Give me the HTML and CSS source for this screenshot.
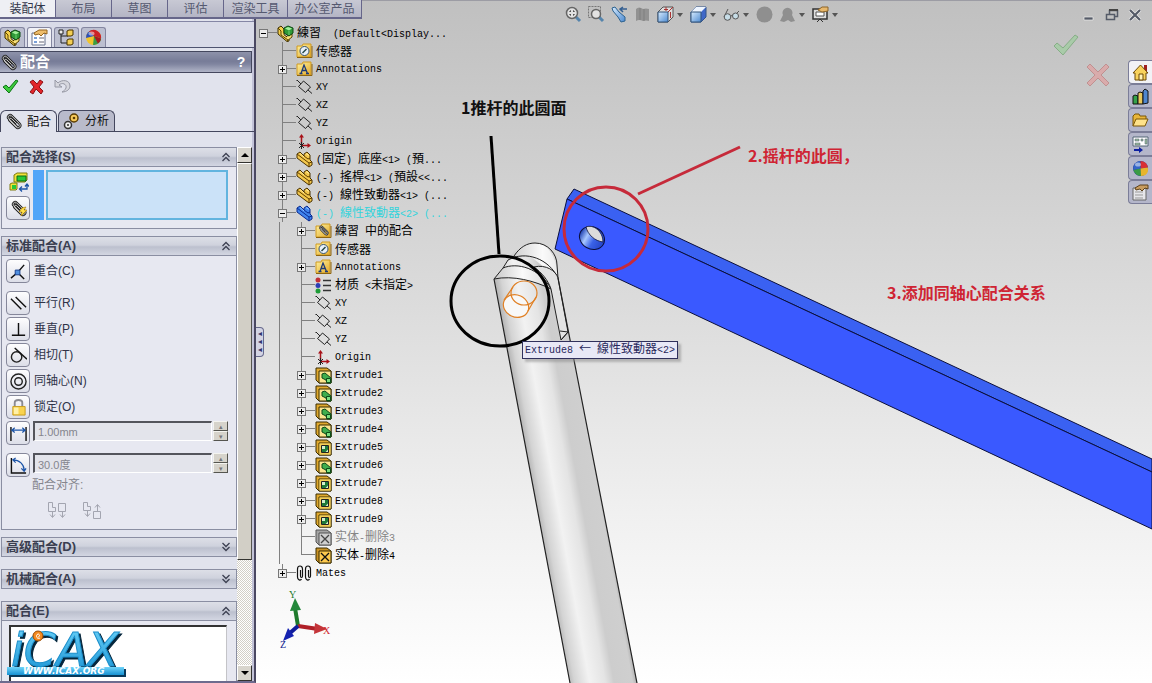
FILE: index.html
```html
<!DOCTYPE html>
<html lang="zh-CN">
<head>
<meta charset="utf-8">
<title>練習</title>
<link rel="stylesheet" href="styles.css">
</head>
<body>
<svg class="defs" aria-hidden="true">
  <defs>
    <linearGradient id="gold" x1="0" y1="0" x2="1" y2="1"><stop offset="0" stop-color="#fff3a0"/><stop offset="1" stop-color="#e2a82a"/></linearGradient>
    <linearGradient id="rod" gradientUnits="userSpaceOnUse" x1="512" y1="375" x2="578" y2="363"><stop offset="0" stop-color="#b4b4b4"/><stop offset=".1" stop-color="#d4d4d4"/><stop offset=".32" stop-color="#f2f2f2"/><stop offset=".55" stop-color="#e4e4e4"/><stop offset=".68" stop-color="#cdcdcd"/><stop offset=".95" stop-color="#cfcfcf"/><stop offset="1" stop-color="#b8b8b8"/></linearGradient>
    <linearGradient id="dome" x1="0" y1="0" x2="1" y2="0"><stop offset="0" stop-color="#c8c8c8"/><stop offset=".5" stop-color="#fafafa"/><stop offset="1" stop-color="#d8d8d8"/></linearGradient>
    <linearGradient id="bore" x1="0" y1="0" x2="1" y2="0"><stop offset="0" stop-color="#1b3db0"/><stop offset=".3" stop-color="#a8c8ff"/><stop offset=".6" stop-color="#3a62e8"/><stop offset="1" stop-color="#2545c8"/></linearGradient>
    <linearGradient id="cyan" x1="0" y1="0" x2="0" y2="1"><stop offset="0" stop-color="#6fd4fa"/><stop offset="1" stop-color="#1791d2"/></linearGradient>
    <linearGradient id="sky" x1="0" y1="0" x2="1" y2="1"><stop offset="0" stop-color="#d8ecff"/><stop offset="1" stop-color="#4d8ad0"/></linearGradient>
  </defs>
  <symbol id="assembly" viewBox="0 0 17 17"><path d="M1 3l3-2 3 3v6l5 3v3l-2 .500L1 9z" fill="#f4cf4a" stroke="#3a2c00"/><path d="M1 3l3 3v4l7 5M10 16l5-4V9l-5 2" fill="#f9e07a" stroke="#5a4300"/><path d="M7 3l4-2 5 2v5l-4 3-5-3z" fill="#2f9a38" stroke="#0d4a12"/><path d="M8 3.500l3-1.500 4 1.500-3 2z" fill="#a4f09c"/><path d="M12 6v4" stroke="#6fd070"/></symbol>
  <symbol id="part" viewBox="0 0 17 17"><path d="M1 3l3-2 4 4V3l3-2 3 3v5l2 2v3l-3 2L1 7z" fill="#f3c74c" stroke="#4a3200"/><path d="M1 3l12 9v4M13 12l3-1M8 5l4 3 2-1" fill="none" stroke="#5e3d00"/><path d="M4 2.500l4 3.500M10 2.500l3 2" stroke="#ffe99a"/></symbol>
  <symbol id="partblue" viewBox="0 0 17 17"><path d="M1 3l3-2 4 4V3l3-2 3 3v5l2 2v3l-3 2L1 7z" fill="#3f85ee" stroke="#0a2a90"/><path d="M1 3l12 9v4M13 12l3-1M8 5l4 3 2-1" fill="none" stroke="#0a2a90"/><path d="M4 2.500l4 3.500M10 2.500l3 2" stroke="#8fc0ff"/></symbol>
  <symbol id="folder" viewBox="0 0 17 17"><path d="M1 3h5l1-2h8v13H1z" fill="url(#gold)" stroke="#d09a20"/><path d="M1 14.500h15V3" fill="none" stroke="#8e6510"/></symbol>
  <symbol id="sensor" viewBox="0 0 17 17"><use href="#folder"/><circle cx="8.500" cy="8" r="4.500" fill="#e8f1fa" stroke="#35516e"/><path d="M6.500 10l4-4" stroke="#244" stroke-width="1.500"/></symbol>
  <symbol id="note" viewBox="0 0 17 17"><use href="#folder"/><path d="M5 12.500L8 4l3.500 8.500M6 9.500h4M3.500 12.500h3M10 12.500h3" fill="none" stroke="#1d3a78" stroke-width="1.300"/></symbol>
  <symbol id="plane" viewBox="0 0 17 17"><path d="M2.500 8.500l5-5.500 7 6-5 5.500zM1 2l4 4M12 12l4 3.500M1 2v1" transform="translate(0 -1)" fill="none" stroke="#222"/></symbol>
  <symbol id="origin" viewBox="0 0 17 17"><path d="M5.500 12V3M5 12.500h8" stroke="#a81118" fill="none" stroke-width="1.500"/><path d="M3 4.500L5.500 1 8 4.500zM11.500 10l3.500 2.500-3.500 2.500z" fill="#a81118"/><path d="M3 10l5 5M8 10l-5 5M5.500 9v7" stroke="#222"/></symbol>
  <symbol id="clip" viewBox="0 0 18 18"><path d="M13 15L4 6C2 4 5 1 7 3l8 8c3 3-1 6-3 4L5 8c-1-1 0-3 2-2l5 5" fill="none" stroke="#222" stroke-width="2.800"/><path d="M13 15L4 6C2 4 5 1 7 3l8 8c3 3-1 6-3 4L5 8c-1-1 0-3 2-2l5 5" fill="none" stroke="#ddd" stroke-width="1"/></symbol>
  <symbol id="mfolder" viewBox="0 0 17 17"><use href="#folder"/><use href="#clip" x="3" y="2" width="11" height="11"/></symbol>
  <symbol id="material" viewBox="0 0 17 17"><path d="M8 3.500h8M8 8.500h8M8 13.500h8" stroke="#333" stroke-width="1.500"/><circle cx="3" cy="3" r="2.500" fill="#c12e35"/><circle cx="3" cy="8.500" r="2.500" fill="#2b3db5"/><circle cx="3" cy="14" r="2.500" fill="#1f9c38"/></symbol>
  <symbol id="slab" viewBox="0 0 17 17"><path d="M1 1h11l4 3v12H4l-3-3z" fill="#e0a92e" stroke="#3a2c00"/><path d="M4 4h12v12H4z" fill="#fbe58e" stroke="#3a2c00"/></symbol>
  <symbol id="boss" viewBox="0 0 17 17"><use href="#slab"/><path d="M7 7l3-1 6 5v5h-4l-1-3-4-2z" fill="#3fae4d" stroke="#0d4a18"/><path d="M11.500 11.500h4v4h-4z" fill="#7be080" stroke="#0d4a18"/></symbol>
  <symbol id="cut" viewBox="0 0 17 17"><use href="#slab"/><path d="M4.500 4.500h11v11h-11z" fill="#f6cd52"/><path d="M6.500 6.500h7v7h-7z" fill="#d4efcb" stroke="#222"/><path d="M7 10h3V7h3v3.500L10.500 13H7z" fill="#1f7a3a"/></symbol>
  <symbol id="del" viewBox="0 0 17 17"><path d="M1 1h11l4 3v12H4l-3-3z" fill="#c99225" stroke="#3a2c00"/><path d="M4 4h12v12H4z" fill="#fdc94e" stroke="#3a2c00"/><path d="M6 6l8 8M14 6l-8 8" stroke="#111" stroke-width="1.300"/></symbol>
  <symbol id="delgray" viewBox="0 0 17 17"><path d="M1 1h11l4 3v12H4l-3-3z" fill="#a4a4a4" stroke="#555"/><path d="M4 4h12v12H4z" fill="#cfcfcf" stroke="#555"/><path d="M6 6l8 8M14 6l-8 8" stroke="#444" stroke-width="1.300"/></symbol>
  <symbol id="mates" viewBox="0 0 17 17"><path d="M4.500 5v6c0 2 2 2 2 0V4c0-4-5-4-5 0v8c0 3 3 4 4 2M12.500 5v6c0 2 2 2 2 0V4c0-4-5-4-5 0v8c0 3 3 4 4 2" fill="none" stroke="#111" stroke-width="1.200"/></symbol>
  <symbol id="prop" viewBox="0 0 17 17"><path d="M1 4h13v12H1z" fill="#fff" stroke="#66708c"/><path d="M3 8h3v2H3zM3 12h3v2H3z" fill="#7aa0d8"/><path d="M8 9h5M8 13h5" stroke="#667" /><path d="M3 4l5-3h8v4l-3-1-3 3-2-2-4 1z" fill="#eebd6b" stroke="#94651f"/></symbol>
  <symbol id="ball" viewBox="0 0 17 17"><circle cx="8.500" cy="8.500" r="7.500" fill="#28439c"/><path d="M8.500 8.500V1a7.500 7.500 0 0 1 7.400 6.500z" fill="#d93033"/><path d="M8.500 8.500L8 1a7.500 7.500 0 0 0-6.500 9z" fill="#3565c8"/><path d="M8.500 8.500l-7 1.500A7.500 7.500 0 0 0 9 16z" fill="#3a9b46"/><path d="M9 16l-.500-7.500 7.400-1c1 5-2 8.500-6.900 8.500z" fill="#e8b52c"/><ellipse cx="6" cy="4.500" rx="3" ry="2" fill="#fff" opacity=".5"/></symbol>
  <symbol id="ballred" viewBox="0 0 17 17"><circle cx="8.500" cy="8.500" r="7.500" fill="#f2c52c"/><path d="M1 9a7.500 7.500 0 0 1 7-8l1 6z" fill="#2c4fb8"/><path d="M4 2.500a7.500 7.500 0 0 1 12 7L9 7z" fill="#cc2227"/><path d="M9 7l7 2.500c0 4-4 6.500-8 6.500z" fill="#3a9b46"/><path d="M9 7l6.900 2.500c0 2-1.500 4-3 5z" fill="#a81a20"/><ellipse cx="6.500" cy="4.500" rx="3" ry="2" fill="#fff" opacity=".5"/></symbol>
  <symbol id="caret" viewBox="0 0 6 4"><path d="M0 0h6L3 4z" fill="#555"/></symbol>
  <symbol id="up2" viewBox="0 0 10 10"><path d="M1.500 5L5 1.500 8.500 5M1.500 9L5 5.500 8.500 9" fill="none" stroke="#3d4152" stroke-width="1.300"/></symbol>
  <symbol id="down2" viewBox="0 0 10 10"><path d="M1.500 1L5 4.500 8.500 1M1.500 5L5 8.500 8.500 5" fill="none" stroke="#3d4152" stroke-width="1.300"/></symbol>
</svg>

<div class="app">
  <nav class="ribbon">
    <button class="rtab on">装配体</button><button class="rtab">布局</button><button class="rtab">草图</button><button class="rtab">评估</button><button class="rtab wide">渲染工具</button><button class="rtab wider">办公室产品</button>
  </nav>

  <aside class="panel">
    <div class="modes">
      <button class="mode" aria-label="设计树"><svg class="ic"><use href="#assembly"/></svg></button>
      <button class="mode on" aria-label="属性"><svg class="ic"><use href="#prop"/></svg></button>
      <button class="mode" aria-label="配置"><svg class="ic" viewBox="0 0 17 17"><path d="M3 1v13h7M3 7h7" fill="none" stroke="#222"/><path d="M1 1h4v4H1z" fill="#eee" stroke="#222"/><path d="M9 2l2-1h4v5l-2 1H9zM9 11l2-1h4v5l-2 1H9z" fill="#f3cf55" stroke="#4a3500"/></svg></button>
      <button class="mode" aria-label="外观"><svg class="ic"><use href="#ballred"/></svg></button>
    </div>
    <header class="title"><svg class="ic"><use href="#clip"/></svg><h1>配合</h1><button class="help" aria-label="帮助">?</button></header>
    <div class="acts">
      <button class="plain" aria-label="确定"><svg class="ic" viewBox="0 0 17 17"><path d="M1 9l3-2 3 3 7-8 2 1L7 15z" fill="#3ccb3c" stroke="#0e7415"/></svg></button>
      <button class="plain" aria-label="取消"><svg class="ic" viewBox="0 0 17 17"><path d="M2 4l3-2 4 4 3-4 3 2-4 5 4 4-2 3-5-5-3 5-3-2 4-5z" fill="#e2252a" stroke="#8e1014"/></svg></button>
      <button class="plain" aria-label="撤消"><svg class="ic" viewBox="0 0 17 17"><path d="M1 2v7h7L5 7c3-3 8-1 7 3-1 2-2 3-4 4 5 0 8-3 8-6 0-6-8-7-12-3z" fill="#d6d7de" stroke="#9698a4"/></svg></button>
    </div>
    <div class="subtabs">
      <button class="stab on"><svg class="ic"><use href="#clip"/></svg>配合</button>
      <button class="stab"><svg class="ic" viewBox="0 0 17 17"><circle cx="11" cy="5" r="4" fill="#f6c95a" stroke="#5b3c00" stroke-width="1.500"/><circle cx="11" cy="5" r="1.300" fill="#5b3c00"/><circle cx="5" cy="12" r="3.500" fill="#eee" stroke="#333" stroke-width="1.500"/><circle cx="5" cy="12" r="1" fill="#333"/></svg>分析</button>
    </div>

    <div class="scroller">
      <div class="groups">
        <section class="group">
          <h2>配合选择(S)<svg><use href="#up2"/></svg></h2>
          <div class="pick">
            <div class="pickicons">
              <svg class="ents" viewBox="0 0 20 20"><path d="M5 3l3-2h10v7l-2 2H5z" fill="#f2e23a" stroke="#7d7a10"/><path d="M8 4h9v5H8z" fill="#27c93a" stroke="#0b6b16"/><path d="M1 12l2-1h5v6l-1 1H1z" fill="#f2e23a" stroke="#7d7a10"/><path d="M3 13h4v4H3z" fill="#27c93a"/><path d="M11 17h7v-4M13 14.500L10.500 17l2.500 2.500M16 14.500l2-2.500 2 2.500" fill="none" stroke="#1d55a8" stroke-width="1.300"/></svg>
              <button class="box" aria-label="多配合模式"><svg class="ic"><use href="#clip"/><path d="M12 8l4-1-2 3h3l-6 6 1-4h-3z" fill="#ffe04a" stroke="#a87a00" stroke-width=".600"/></svg></button>
            </div>
            <span class="swatch"></span>
            <textarea class="sel" aria-label="配合选择"></textarea>
          </div>
        </section>

        <section class="group">
          <h2>标准配合(A)<svg><use href="#up2"/></svg></h2>
          <div class="mates">
            <button class="mate first"><span class="box"><svg class="ic" viewBox="0 0 18 18"><path d="M1 16l7-6 7-8M8 10l7 7" fill="none" stroke="#111" stroke-width="1.500"/><path d="M5.500 7.500h5v5h-5z" fill="#4f8fe0" stroke="#173f8c"/></svg></span>重合(C)</button>
            <button class="mate"><span class="box"><svg class="ic" viewBox="0 0 18 18"><path d="M1 4l11 11M6 2l11 11" stroke="#111" stroke-width="1.500"/></svg></span>平行(R)</button>
            <button class="mate"><span class="box"><svg class="ic" viewBox="0 0 18 18"><path d="M9 2v12.500M2 15h14" stroke="#111" stroke-width="1.500"/></svg></span>垂直(P)</button>
            <button class="mate"><span class="box"><svg class="ic" viewBox="0 0 18 18"><circle cx="7" cy="10.500" r="5.500" fill="none" stroke="#222" stroke-width="1.500"/><path d="M5 1l13 12" stroke="#111" stroke-width="1.500"/></svg></span>相切(T)</button>
            <button class="mate"><span class="box"><svg class="ic" viewBox="0 0 18 18"><circle cx="9" cy="9" r="8" fill="none" stroke="#222" stroke-width="1.500"/><circle cx="9" cy="9" r="4" fill="none" stroke="#222" stroke-width="1.500"/></svg></span>同轴心(N)</button>
            <button class="mate"><span class="box"><svg class="ic" viewBox="0 0 18 18"><path d="M5 8V4c0-4 8-4 8 0v4" fill="none" stroke="#8b8b92" stroke-width="2"/><path d="M3 8h13v9H3z" fill="#f9d34f" stroke="#c79a1a"/><path d="M4 9h5v7H4z" fill="#fff1a8"/></svg></span>锁定(O)</button>
            <div class="value">
              <button class="box" aria-label="距离"><svg class="ic" viewBox="0 0 18 18"><path d="M1 2v15M17 2v15" stroke="#111" stroke-width="1.500"/><path d="M2 5.500h14M5 3L2 5.500 5 8M13 3l3 2.500L13 8" fill="none" stroke="#1d55a8" stroke-width="1.300"/></svg></button>
              <input type="text" value="1.00mm" aria-label="距离值" disabled>
              <span class="spin"><button aria-label="增加" disabled>▴</button><button aria-label="减少" disabled>▾</button></span>
            </div>
            <div class="value angle">
              <button class="box" aria-label="角度"><svg class="ic" viewBox="0 0 18 18"><path d="M1.500 1v16H17" fill="none" stroke="#111" stroke-width="1.500"/><path d="M3 3c7 0 12 5 12 11M6 1L3 3l3 3M12 12l3 3 2-3" fill="none" stroke="#1d55a8" stroke-width="1.300"/></svg></button>
              <input type="text" value="30.0度" aria-label="角度值" disabled>
              <span class="spin"><button aria-label="增加" disabled>▴</button><button aria-label="减少" disabled>▾</button></span>
            </div>
            <p class="align">配合对齐:</p>
            <div class="aligns">
              <button class="plain" aria-label="同向对齐" disabled><svg viewBox="0 0 20 18"><path d="M1.500 1.500h4v5h3v4h-7zM11.500 2.500h7v8h-7zM5.500 11v5M3 13.500l2.500 3 2.500-3M15.500 11v5M13 13.500l2.500 3 2.500-3" fill="none" stroke="#a3a5b0"/></svg></button>
              <button class="plain" aria-label="反向对齐" disabled><svg viewBox="0 0 20 18"><path d="M1.500 1.500h4v4h3v4h-7zM5.500 10v5M3 12.500l2.500 3 2.500-3M11.500 10.500h7v7h-7zM15.500 10V4M13 6.500l2.500-3 2.500 3" fill="none" stroke="#a3a5b0"/></svg></button>
            </div>
          </div>
        </section>

        <section class="group fold"><h2>高级配合(D)<svg><use href="#down2"/></svg></h2></section>
        <section class="group fold"><h2>机械配合(A)<svg><use href="#down2"/></svg></h2></section>
        <section class="group last">
          <h2>配合(E)<svg><use href="#up2"/></svg></h2>
          <div class="list">
            <svg class="logo" viewBox="0 0 120 48" role="img" aria-label="iCAX">
              <text x="4" y="35" class="word">iCAX</text>
              <circle cx="31" cy="5" r="5" fill="#f58a1f" stroke="#9c4a00"/><path d="M33 7c-3 2-5-3-2-4 2 0 2 3 0 3" fill="none" stroke="#fff"/>
              <path d="M2 38h117v8H2z" fill="#083a5c"/><path d="M0 36h117v8H0z" fill="url(#cyan)"/>
              <text x="16" y="43" class="url">WWW.ICAX.ORG</text>
            </svg>
          </div>
        </section>
      </div>
      <div class="bar">
        <button class="arrow" aria-label="向上滚动"><svg viewBox="0 0 8 4"><path d="M0 4l4-4 4 4z"/></svg></button>
        <span class="thumb"></span><span class="track"></span>
        <button class="arrow" aria-label="向下滚动"><svg viewBox="0 0 8 4"><path d="M0 0l4 4 4-4z"/></svg></button>
      </div>
    </div>
  </aside>

  <main class="view">
    <svg class="scene" viewBox="256 0 896 683" preserveAspectRatio="xMinYMin slice">
      <g stroke="#0a0f3c" stroke-linejoin="round">
        <path d="M574 189L567 199 1152 472V459z" fill="#3a61f2"/>
        <path d="M567 199L555 249 1152 529V472z" fill="#3a59ff"/>
        <ellipse cx="592" cy="238" rx="13" ry="11" transform="rotate(30 592 238)" fill="url(#bore)"/>
        <path d="M586 227c7-3 17 4 17 15-8-1-15-7-17-15z" fill="#dcdcdc" stroke-width=".800"/>
      </g>
      <g stroke="#222" stroke-linejoin="round">
        <path d="M508 260C514 248 525 243 535 243c12 0 21 11 23 35l19 92-20-30z" fill="url(#dome)" stroke="none"/>
        <path d="M514 256C520 247 527 243 535 243c13 0 22 11 22 22l1 13" fill="none"/>
        <path d="M494 279L503 268 508 260 530 256 558 278 637 683H570z" fill="url(#rod)" stroke="none"/>
        <path d="M494 279L503 268c14-6 37 0 48 21-16-8-38-14-57-10z" fill="url(#dome)"/>
        <path d="M503 268l5-8c18-10 41-1 50 18" fill="none"/>
        <path d="M551 289c-3-9-9-16-17-22 12-3 22 4 24 11l10 54-7 8z" fill="#e3e3e3"/>
        <path d="M560 331l8 1-7 8" fill="none"/>
        <path d="M494 279L570 683M558 278L637 683" fill="none" stroke-width="1.200"/>
      </g>
      <g stroke="#e08025" fill="none" stroke-width="1.200">
        <ellipse cx="516" cy="306" rx="13" ry="11" transform="rotate(25 516 306)" fill="#f8f8f8"/>
        <ellipse cx="524" cy="293" rx="13" ry="12"/>
        <path d="M504 300l9-13M528 311l8-14"/>
      </g>
      <g fill="none" stroke="#000" stroke-width="3"><ellipse cx="500" cy="301" rx="49" ry="45"/><path d="M491 136l8 118"/></g>
      <g fill="none" stroke="#c62a3a" stroke-width="3"><circle cx="606" cy="229" r="42"/><path d="M638 194l102-47"/></g>
      <text x="461" y="114" class="call">1推杆的此圆面</text>
      <text x="748" y="162" class="call red">2.摇杆的此圆，</text>
      <text x="887" y="299" class="call red">3.添加同轴心配合关系</text>
      <g class="triad">
        <path d="M298 626l-3-18" stroke="#1e7a2c" stroke-width="4"/><path d="M290 611l5-13 6 12z" fill="#23873a"/>
        <path d="M298 626l20 3" stroke="#b02028" stroke-width="4"/><path d="M315 623l12 6-13 5z" fill="#c4353a"/>
        <path d="M298 626l-8 7" stroke="#101c9c" stroke-width="4"/><path d="M288 628l6 8-11 5z" fill="#1522b0"/>
        <text x="289" y="598" fill="#1e7a2c">Y</text><text x="323" y="634" fill="#d0262c">X</text><text x="280" y="648" fill="#10208c">Z</text>
      </g>
    </svg>

    <div class="hud">
      <button aria-label="整屏显示"><svg viewBox="0 0 17 17"><path d="M10 10l5 5" stroke="#5584ac" stroke-width="3"/><circle cx="7" cy="7" r="5.500" fill="#e2e2e2" stroke="#666" stroke-width="1.500"/><path d="M5 6V5h1M8 5h1v1M9 8v1H8M6 9H5V8" fill="none" stroke="#222"/></svg></button>
      <button aria-label="局部放大"><svg viewBox="0 0 17 17"><path d="M.500.500h12v11H.500z" fill="none" stroke="#777" stroke-dasharray="2 1"/><path d="M11 11l4 4" stroke="#5584ac" stroke-width="3"/><circle cx="8" cy="8" r="4.500" fill="#e2e2e2" stroke="#666" stroke-width="1.500"/></svg></button>
      <button aria-label="上一视图"><svg viewBox="0 0 17 17"><path d="M1 2l3-1 4 5 6 5v4l-4 1-3-5-5-6z" fill="url(#sky)" stroke="#2d628f"/><path d="M16 3h-6M12 1L9 3l3 3" fill="none" stroke="#345f91" stroke-width="1.500"/></svg></button>
      <button aria-label="剖面视图"><svg viewBox="0 0 17 17"><path d="M2 3q3-3 7 0 3-1 6 0v12q-3-1-6 0-4-2-7 0z" fill="#929292"/><path d="M6 2v12M10 3v12" stroke="#7e7e7e"/></svg></button>
      <button class="drop" aria-label="视图定向"><svg viewBox="0 0 17 17"><path d="M1 6l5-5h10v10l-5 5H1z" fill="#ddd" stroke="#555"/><path d="M1 6h10v10H1z" fill="url(#sky)" stroke="#33557a"/><path d="M11 6l5-5M7 3.500h4M9 1v4M13.500 6v6" stroke="#a33"/></svg><svg class="caret"><use href="#caret"/></svg></button>
      <button class="drop" aria-label="显示样式"><svg viewBox="0 0 17 17"><path d="M1 6l5-5h10v10l-5 5H1z" fill="#4068c8" stroke="#33558a"/><path d="M1 6l5-5h10l-5 5z" fill="#eef5ff"/><path d="M1 6h10v10H1z" fill="url(#sky)" stroke="#33557a"/></svg><svg class="caret"><use href="#caret"/></svg></button>
      <button class="drop" aria-label="隐藏/显示"><svg viewBox="0 0 17 17"><path d="M1 11L5 3M8 10q2-2 3 0M13 8l3-3" fill="none" stroke="#555"/><circle cx="4.500" cy="11" r="3.300" fill="#c6dce6" stroke="#555"/><circle cx="12.500" cy="10" r="3" fill="#c6dce6" stroke="#555"/></svg><svg class="caret"><use href="#caret"/></svg></button>
      <button aria-label="编辑外观"><svg viewBox="0 0 17 17"><circle cx="8.500" cy="8.500" r="8" fill="#8f8f8f"/></svg></button>
      <button class="drop" aria-label="应用布景"><svg viewBox="0 0 17 17"><path d="M1 15l3-6a5 5 0 1 1 9 0l3 6-4 1-3-2-4 2z" fill="#8f8f8f"/></svg><svg class="caret"><use href="#caret"/></svg></button>
      <button class="drop" aria-label="视图设定"><svg viewBox="0 0 17 17"><path d="M1 3h14v10H1z" fill="#ddd" stroke="#333" stroke-width="1.500"/><path d="M4 6h8v4H4z" fill="#fff" stroke="#555"/><path d="M5 16l3-3 3 3" fill="none" stroke="#333"/><path d="M6 4l4-3h6v4l-6 1z" fill="#e8b86c" stroke="#8c6428"/></svg><svg class="caret"><use href="#caret"/></svg></button>
    </div>

    <div class="wins">
      <button aria-label="最小化"><svg viewBox="0 0 14 14"><path d="M2 9h9v3H2z" fill="#555b68" stroke="#eee" stroke-width=".700"/></svg></button>
      <button aria-label="还原"><svg viewBox="0 0 14 14"><path d="M4.500 6V2.500h8v6H9M1.500 6.500h8v5h-8z" fill="none" stroke="#555b68" stroke-width="1.500"/><path d="M4 2h9" stroke="#444" stroke-width="2"/></svg></button>
      <button aria-label="关闭"><svg viewBox="0 0 14 14"><path d="M2 2l10 10M12 2L2 12" stroke="#eee" stroke-width="3.500"/><path d="M2 2l10 10M12 2L2 12" stroke="#555b68" stroke-width="2.200"/></svg></button>
    </div>
    <button class="okbig" aria-label="确定"><svg viewBox="0 0 26 22"><path d="M1 12l3-3 6 5L22 1l3 2-15 18z" fill="#a9cba9" stroke="#86ae86"/></svg></button>
    <button class="nobig" aria-label="取消"><svg viewBox="0 0 24 24"><path d="M1 4l3-3 8 8 8-8 3 3-8 8 8 8-3 3-8-8-8 8-3-3 8-8z" fill="#d9abab" stroke="#c09090"/></svg></button>

    <div class="task">
      <button class="on" aria-label="资源"><svg class="ic" viewBox="0 0 17 17"><path d="M12 1h3v6h-3z" fill="#a02020"/><path d="M1 9l7.500-8L16 9h-2v7H3V9z" fill="#f8d25c" stroke="#6d4a08"/><path d="M7 10h4v6H7z" fill="#fff3b8" stroke="#6d4a08"/></svg></button>
      <button aria-label="设计库"><svg class="ic" viewBox="0 0 17 17"><path d="M1 8l2-1 3 1v8H1z" fill="#33a14a" stroke="#111"/><path d="M6 5l2-1 3 1v11H6z" fill="#e8c85c" stroke="#111"/><path d="M11 3l2-2 3 2v12l-5 1z" fill="#4e86cf" stroke="#111"/></svg></button>
      <button aria-label="文件"><svg class="ic" viewBox="0 0 17 17"><path d="M1 14V4l2-2h4l1 2h6v3" fill="#e9b63c" stroke="#7b5708"/><path d="M1 14l3-7h12l-3 7z" fill="#ffe28a" stroke="#7b5708"/></svg></button>
      <button aria-label="视图调色板"><svg class="ic" viewBox="0 0 17 17"><path d="M1 1h15v9H1z" fill="#fff" stroke="#567"/><path d="M3 3h4v2H3zM9 3h2v2H9zM3 7h5v2H3zM13 3h2v5h-2z" fill="#9fc0a0" stroke="#456" stroke-width=".500"/><path d="M2 13h5v-2l4 3-4 3v-2H2z" fill="#0c1fa0"/></svg></button>
      <button aria-label="外观"><svg class="ic"><use href="#ball"/></svg></button>
      <button aria-label="自定义属性"><svg class="ic" viewBox="0 0 17 17"><path d="M1 4h13v12H1z" fill="#e6e6ea" stroke="#666"/><path d="M3 8h8M3 11h8M3 14h8" stroke="#999"/><path d="M3 4l5-3h8v4l-3-1-3 3-2-2-4 1z" fill="#c99d60" stroke="#5c401a"/></svg></button>
    </div>

    <button class="grip" aria-label="折叠面板">◂<br>◂<br>◂</button>

    <ul class="tree">
      <li><div class="row"><span class="twig"><button class="ex open" aria-label="折叠"></button></span><svg class="ic"><use href="#assembly"/></svg><span class="lb"><span class="zh">練習</span>&nbsp; (Default&lt;Display...</span></div>
        <ul>
          <li><div class="row"><span class="twig"></span><svg class="ic"><use href="#sensor"/></svg><span class="lb zh">传感器</span></div></li>
          <li><div class="row"><span class="twig"><button class="ex" aria-label="展开"></button></span><svg class="ic"><use href="#note"/></svg><span class="lb lat">Annotations</span></div></li>
          <li><div class="row"><span class="twig"></span><svg class="ic"><use href="#plane"/></svg><span class="lb lat">XY</span></div></li>
          <li><div class="row"><span class="twig"></span><svg class="ic"><use href="#plane"/></svg><span class="lb lat">XZ</span></div></li>
          <li><div class="row"><span class="twig"></span><svg class="ic"><use href="#plane"/></svg><span class="lb lat">YZ</span></div></li>
          <li><div class="row"><span class="twig"></span><svg class="ic"><use href="#origin"/></svg><span class="lb lat">Origin</span></div></li>
          <li><div class="row"><span class="twig"><button class="ex" aria-label="展开"></button></span><svg class="ic"><use href="#part"/></svg><span class="lb">(<span class="zh">固定</span>) <span class="zh">底座</span>&lt;1&gt; (<span class="zh">預</span>...</span></div></li>
          <li><div class="row"><span class="twig"><button class="ex" aria-label="展开"></button></span><svg class="ic"><use href="#part"/></svg><span class="lb">(-) <span class="zh">搖桿</span>&lt;1&gt; (<span class="zh">預設</span>&lt;&lt;...</span></div></li>
          <li><div class="row"><span class="twig"><button class="ex" aria-label="展开"></button></span><svg class="ic"><use href="#part"/></svg><span class="lb">(-) <span class="zh">線性致動器</span>&lt;1&gt; (...</span></div></li>
          <li class="branch"><div class="row"><span class="twig"><button class="ex open" aria-label="折叠"></button></span><svg class="ic"><use href="#partblue"/></svg><span class="lb picked">(-) <span class="zh">線性致動器</span>&lt;2&gt; (...</span></div>
            <ul>
              <li><div class="row"><span class="twig"><button class="ex" aria-label="展开"></button></span><svg class="ic"><use href="#mfolder"/></svg><span class="lb"><span class="zh">練習</span> <span class="zh">中的配合</span></span></div></li>
              <li><div class="row"><span class="twig"></span><svg class="ic"><use href="#sensor"/></svg><span class="lb zh">传感器</span></div></li>
              <li><div class="row"><span class="twig"><button class="ex" aria-label="展开"></button></span><svg class="ic"><use href="#note"/></svg><span class="lb lat">Annotations</span></div></li>
              <li><div class="row"><span class="twig"></span><svg class="ic"><use href="#material"/></svg><span class="lb"><span class="zh">材质</span> &lt;<span class="zh">未指定</span>&gt;</span></div></li>
              <li><div class="row"><span class="twig"></span><svg class="ic"><use href="#plane"/></svg><span class="lb lat">XY</span></div></li>
              <li><div class="row"><span class="twig"></span><svg class="ic"><use href="#plane"/></svg><span class="lb lat">XZ</span></div></li>
              <li><div class="row"><span class="twig"></span><svg class="ic"><use href="#plane"/></svg><span class="lb lat">YZ</span></div></li>
              <li><div class="row"><span class="twig"></span><svg class="ic"><use href="#origin"/></svg><span class="lb lat">Origin</span></div></li>
              <li><div class="row"><span class="twig"><button class="ex" aria-label="展开"></button></span><svg class="ic"><use href="#boss"/></svg><span class="lb lat">Extrude1</span></div></li>
              <li><div class="row"><span class="twig"><button class="ex" aria-label="展开"></button></span><svg class="ic"><use href="#boss"/></svg><span class="lb lat">Extrude2</span></div></li>
              <li><div class="row"><span class="twig"><button class="ex" aria-label="展开"></button></span><svg class="ic"><use href="#boss"/></svg><span class="lb lat">Extrude3</span></div></li>
              <li><div class="row"><span class="twig"><button class="ex" aria-label="展开"></button></span><svg class="ic"><use href="#boss"/></svg><span class="lb lat">Extrude4</span></div></li>
              <li><div class="row"><span class="twig"><button class="ex" aria-label="展开"></button></span><svg class="ic"><use href="#cut"/></svg><span class="lb lat">Extrude5</span></div></li>
              <li><div class="row"><span class="twig"><button class="ex" aria-label="展开"></button></span><svg class="ic"><use href="#boss"/></svg><span class="lb lat">Extrude6</span></div></li>
              <li><div class="row"><span class="twig"><button class="ex" aria-label="展开"></button></span><svg class="ic"><use href="#cut"/></svg><span class="lb lat">Extrude7</span></div></li>
              <li><div class="row"><span class="twig"><button class="ex" aria-label="展开"></button></span><svg class="ic"><use href="#cut"/></svg><span class="lb lat">Extrude8</span></div></li>
              <li><div class="row"><span class="twig"><button class="ex" aria-label="展开"></button></span><svg class="ic"><use href="#cut"/></svg><span class="lb lat">Extrude9</span></div></li>
              <li><div class="row"><span class="twig"></span><svg class="ic"><use href="#delgray"/></svg><span class="lb dim"><span class="zh">实体</span>-<span class="zh">删除</span>3</span></div></li>
              <li><div class="row"><span class="twig"></span><svg class="ic"><use href="#del"/></svg><span class="lb"><span class="zh">实体</span>-<span class="zh">删除</span>4</span></div></li>
            </ul>
          </li>
          <li><div class="row"><span class="twig"><button class="ex" aria-label="展开"></button></span><svg class="ic"><use href="#mates"/></svg><span class="lb lat">Mates</span></div></li>
        </ul>
      </li>
    </ul>

    <div class="tip" role="tooltip">Extrude8 <span class="zh">←</span> <span class="zh">線性致動器</span>&lt;2&gt;</div>
  </main>
</div>
</body>
</html>
```
FILE: styles.css
```css
* { box-sizing: border-box; }
body { margin: 0; font: 12px/16px "Liberation Sans", "Noto Sans CJK SC", sans-serif; color: #2f3348; }
button { font: inherit; color: inherit; padding: 0; margin: 0; border: 0; background: none; }
ul { list-style: none; margin: 0; padding: 0; }
h1, h2, p { margin: 0; }
svg { display: block; flex: none; }
.defs { position: absolute; width: 0; height: 0; }
.ic { width: 17px; height: 17px; }
.plain { display: block; }

.app { display: grid; grid-template-columns: 256px 1fr; grid-template-rows: auto 1fr; min-height: 100vh; overflow: hidden; }

/* ribbon tabs */
.ribbon { grid-column: 1 / 3; grid-row: 1; z-index: 2; display: flex; justify-self: start; height: 19px; border-bottom: 2px solid #66668a; background: #b9bac9; }
.rtab { width: 56px; border-right: 1px solid #66668a; color: #555970; background: linear-gradient(#c8c9d4, #b4b5c5); }
.rtab.on { background: #eeeff4; color: #33374a; }
.rtab.wide { width: 64px; }
.rtab.wider { width: 74px; }

/* property panel */
.panel { grid-column: 1; grid-row: 2; display: flex; flex-direction: column; background: #e1e3ed; border-right: 2px solid #4a4862; border-bottom: 2px solid #6d6b8e; box-shadow: inset -2px 0 #c3c3d8; }
.modes { display: flex; gap: 2px; margin-top: 2px; padding-top: 5px; height: 27px; border-top: 1px solid #8486a5; border-bottom: 1px solid #4f5470; background: #d9dbe8; }
.mode { display: flex; align-items: center; justify-content: center; width: 25px; border: 1px solid #8486a0; border-bottom: 0; border-radius: 3px 3px 0 0; background: #bcbfd0; }
.mode.on { background: #f1f2f7; }
.title { display: flex; align-items: center; gap: 3px; height: 22px; margin: 3px 2px 0 0; color: #fff; border: solid #44475e; border-width: 1px 1px 1px 0; background: linear-gradient(#8e92aa, #777c98 45%, #7f849f 60%, #b0b4c7); }
.title h1 { flex: 1; font-size: 15px; line-height: 20px; }
.help { width: 20px; font-size: 14px; font-weight: bold; }
.acts { display: flex; align-items: flex-start; gap: 9px; height: 37px; padding: 5px 2px; }
.subtabs { display: flex; gap: 1px; height: 22px; border-bottom: 1px solid #44475e; }
.stab { display: flex; align-items: center; gap: 5px; width: 57px; padding-left: 4px; color: #111; border: 1px solid #44475e; border-bottom: 0; border-radius: 6px 6px 0 0; background: #b9bbcb; white-space: nowrap; }
.stab.on { height: 22px; background: #e1e3ed; }

.scroller { flex: 1; display: flex; margin-top: 15px; padding-right: 2px; }
.groups { flex: 1; min-width: 0; display: flex; flex-direction: column; gap: 7px; padding-left: 1px; }
.group { border: 1px solid #8a8ea2; background: #e7e8f1; }
.group h2 { display: flex; align-items: center; justify-content: space-between; height: 19px; padding: 0 5px 0 4px; font-size: 13px; line-height: 18px; color: #3a3e50; border-bottom: 1px solid #8a8ea2; background: linear-gradient(#dddfe7, #cfd2dd 45%, #bcc0ce 55%, #d3d6e2); }
.group h2 svg { width: 10px; height: 10px; }
.group.fold { height: 20px; margin-bottom: 5px; }
.group.fold h2 { height: 18px; border-bottom: 0; }
.group.last { flex: 1; display: flex; flex-direction: column; border-bottom: 0; }
.box { display: flex; flex: none; align-items: center; justify-content: center; width: 24px; height: 24px; border: 1px solid #85879a; border-radius: 4px; background: linear-gradient(#fdfdfe, #dcdee8); }
.pick { display: flex; gap: 2px; height: 61px; padding: 3px 8px 8px 4px; }
.pickicons { width: 25px; }
.ents { width: 20px; height: 20px; margin: 2px 0 4px 3px; }
.swatch { width: 11px; background: #52a5f8; }
.sel { flex: 1; min-width: 0; border: 2px solid #62b4df; border-radius: 0; background: #cbe2f8; resize: none; }
.mates { display: flex; flex-direction: column; gap: 2px; padding: 3px 8px 10px 4px; }
.mate { display: flex; align-items: center; gap: 4px; height: 24px; text-align: left; }
.mate.first { margin-bottom: 6px; }
.value { display: flex; height: 24px; }
.value.angle { margin-top: 6px; }
.value input { flex: 1; min-width: 0; height: 20px; margin-left: 3px; padding: 0 3px; font: 11px/16px "Liberation Sans", "Noto Sans CJK SC", sans-serif; color: #85868e; background: #e3e4eb; border: solid; border-width: 2px 1px 1px 2px; border-color: #54555c #fff #fff #54555c; border-radius: 0; }
.spin { display: flex; flex-direction: column; width: 16px; height: 20px; padding-left: 1px; }
.spin button { flex: 1; min-height: 0; font-size: 7px; line-height: 7px; color: #77777c; background: #d6d3cb; border: 1px solid; border-color: #f4f4f0 #55554f #55554f #f4f4f0; }
.align { height: 16px; margin-top: -2px; padding-left: 26px; color: #85868e; }
.aligns { display: flex; gap: 15px; padding: 6px 0 0 41px; }
.aligns svg { width: 20px; height: 18px; }
.list { flex: 1; min-height: 50px; margin: 4px 9px 0 7px; border: 1px solid #c4c4c8; border-top: 2px solid #333; border-left: 2px solid #333; border-bottom: 0; background: #fff; }
.logo { width: 120px; height: 48px; margin: 4px 0 -8px -4px; overflow: visible; }
.word { font: italic 46px "DejaVu Sans", sans-serif; fill: url(#cyan); stroke: #1d8fcb; stroke-width: 1px; filter: drop-shadow(2px 2px 0 #05263c); }
.url { font: italic bold 9px "DejaVu Sans", sans-serif; fill: #fff; }

.bar { display: flex; flex: none; flex-direction: column; width: 15px; background: #e9e8e4; }
.arrow { display: flex; align-items: center; justify-content: center; height: 16px; background: #d8d5cd; border: 1px solid; border-color: #fff #33332f #33332f #fff; }
.arrow svg { width: 8px; height: 4px; }
.thumb { flex: 397; background: #d2cfc6; border: 1px solid; border-color: #fff #55554f #33332f #fff; }
.track { flex: 106; background: repeating-conic-gradient(#d2cfc6 0 25%, #fff 0 50%) 0 0 / 2px 2px; }

/* graphics view */
.view { grid-column: 2; grid-row: 1 / 3; position: relative; padding: 24px 0 0 2px; background: linear-gradient(#9c9ca4, #9c9ca4) 0 0 / 100% 1px no-repeat, linear-gradient(#c0c0c0, #dcdcdc 45%, #f0f0f0 75%, #fff); overflow: hidden; }
.scene { position: absolute; left: 0; top: 0; width: 100%; height: 100%; }
.call { font: bold 16px "Noto Sans CJK SC", sans-serif; fill: #111; }
.call.red { fill: #cf2433; }
.triad text { font: 10px "Liberation Serif", serif; }

.tree { position: relative; width: 220px; color: #000; }
.tree ul { padding-left: 19px; }
.tree .branch > ul { margin-left: 2px; padding-left: 16px; border-left: 1px solid #808080; }
.tree li li { background: linear-gradient(#808080, #808080) 5px 0 / 1px 100% no-repeat; }
.tree li li.branch { background-size: 1px 18px; }
.tree li li:last-child { background-size: 1px 9px; }
.row { display: flex; align-items: center; height: 18px; }
.twig { display: flex; align-items: center; width: 19px; height: 18px; padding-left: 1px; background: linear-gradient(#808080, #808080) 5px 8px / 14px 1px no-repeat; }
.ex { width: 9px; height: 9px; border: 1px solid #777; background: linear-gradient(#000, #000) 1px 3px / 5px 1px no-repeat, linear-gradient(#000, #000) 3px 1px / 1px 5px no-repeat, #ececec; }
.ex.open { background: linear-gradient(#000, #000) 1px 3px / 5px 1px no-repeat, #ececec; }
.lb { margin-left: 3px; font: 10px/18px "Liberation Mono", "Noto Sans CJK SC", monospace; white-space: nowrap; }
.lat { padding-top: 1px; }
.zh { font-family: "Noto Sans CJK SC", sans-serif; font-size: 12px; }
.picked { color: #35d3dc; }
.dim { color: #858585; }

.tip { position: absolute; left: 266px; top: 341px; padding: 0 2px; color: #28285c; background: #e8e8f6; border: 1px solid #30305c; box-shadow: 3px 3px 2px #8888; font: 10px/14px "Liberation Mono", monospace; white-space: nowrap; }
.tip .zh { line-height: 12px; }

.hud { position: absolute; left: 309px; top: 6px; display: flex; gap: 6px; }
.hud button { display: flex; align-items: center; gap: 3px; }
.hud button > svg { width: 17px; height: 17px; }
.hud button > .caret { width: 6px; height: 4px; }
.hud .drop { margin-right: 1px; }
.wins { position: absolute; right: 10px; top: 8px; display: flex; gap: 9px; }
.wins svg { width: 14px; height: 14px; }
.okbig { position: absolute; right: 73px; top: 34px; }
.okbig svg { width: 26px; height: 22px; }
.nobig { position: absolute; right: 42px; top: 63px; }
.nobig svg { width: 24px; height: 24px; }
.task { position: absolute; right: 0; top: 60px; display: flex; flex-direction: column; }
.task button { display: flex; align-items: center; justify-content: center; width: 24px; height: 24px; border: 1px solid #7b7d98; border-right: 0; border-radius: 4px 0 0 4px; background: #b4b6ca; }
.task button.on { background: #f2f2f6; }
.grip { position: absolute; left: 0; top: 327px; width: 8px; height: 30px; font-size: 8px; line-height: 8px; color: #33356e; background: #d3d4e4; border: 1px solid #66688c; border-left: 0; border-radius: 0 4px 4px 0; }
```
